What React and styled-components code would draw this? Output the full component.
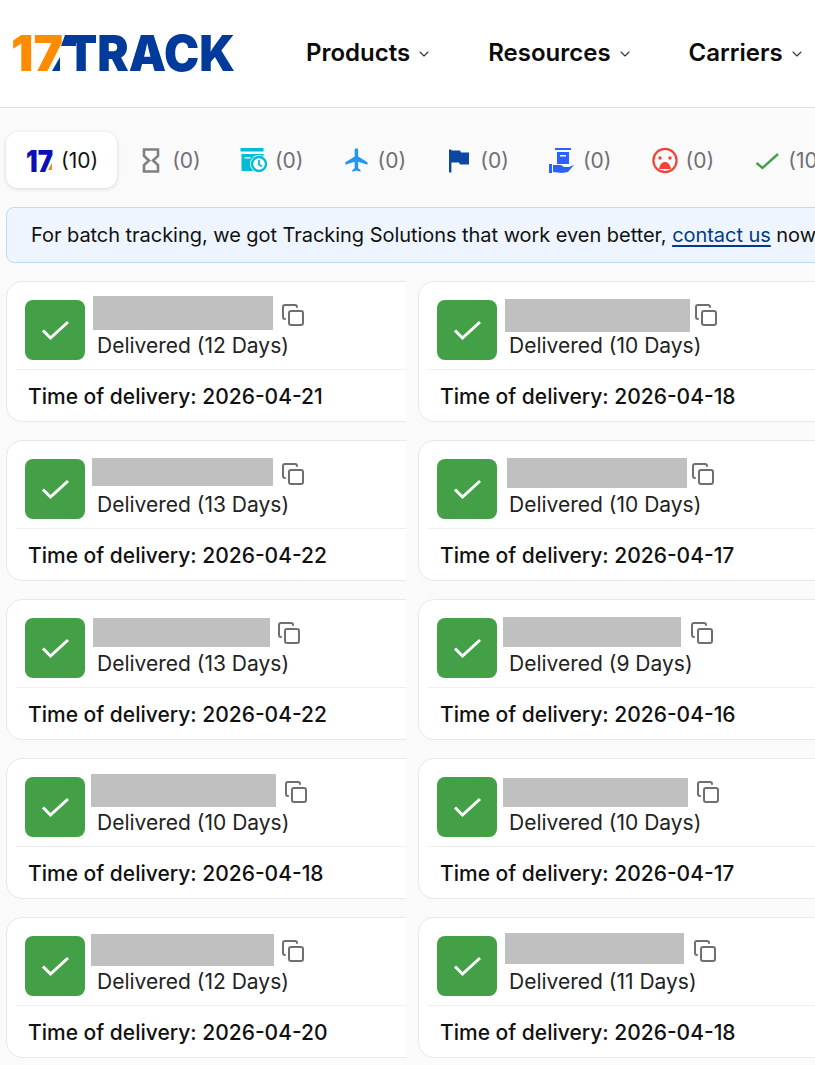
import React from 'react';
import styled, { createGlobalStyle } from 'styled-components';
import { Copy, ChevronDown } from 'lucide-react';

const GlobalStyle = createGlobalStyle`
  html, body {
    margin: 0;
    padding: 0;
    height: 100%;
    overflow: hidden;
    background: #fafafa;
    font-family: Inter, "Liberation Sans", sans-serif;
  }
`;

const Page = styled.div`
  width: 815px;
  height: 1065px;
  overflow: hidden;
`;

const Header = styled.header`
  display: flex;
  align-items: center;
  height: 107px;
  box-sizing: content-box;
  padding-left: 12px;
  background: #fff;
  border-bottom: 1px solid #e4e4e4;
`;

const LogoSvg = styled.svg`
  display: block;
  flex: none;
  margin-top: -1px;
`;

const Nav = styled.nav`
  display: flex;
  margin-left: 70px;
  gap: 56px;
  margin-top: -2px;
`;

const NavItem = styled.a`
  display: flex;
  align-items: center;
  gap: 6px;
  font-size: 24px;
  font-weight: 600;
  color: #0b0b0b;
  white-space: nowrap;
`;

const Tabs = styled.div`
  display: flex;
  margin: 24px 0 0 6px;
  width: 900px;
`;

const Tab = styled.div`
  display: flex;
  align-items: center;
  gap: 7px;
  height: 56px;
  padding: 0 19.1px 0 20px;
  flex: none;
  box-sizing: border-box;
  font-size: 21px;
  color: ${(p) => (p.$active ? '#111' : '#6f6f76')};
  background: ${(p) => (p.$active ? '#fff' : 'transparent')};
  border-radius: 12px;
  box-shadow: ${(p) => (p.$active ? '0 1px 4px rgba(0, 0, 0, 0.14)' : 'none')};
`;

const Banner = styled.div`
  display: flex;
  align-items: center;
  margin: 19px 0 0 6px;
  width: 900px;
  height: 56px;
  box-sizing: border-box;
  padding-left: 24px;
  background: #eef5ff;
  border: 1px solid #bbdcfb;
  border-radius: 8px;
  font-size: 20px;
  letter-spacing: -0.045px;
  color: #111;
  white-space: pre;
`;

const ContactLink = styled.a`
  color: #003a8c;
  text-decoration: underline;
  text-underline-offset: 3px;
`;

const Grid = styled.div`
  display: grid;
  grid-template-columns: 400px 400px;
  gap: 18px 12px;
  margin: 18px 0 0 6px;
`;

const CardClip = styled.div`
  width: 400px;
  overflow: hidden;
`;

const Card = styled.article`
  width: 430px;
  height: 141px;
  box-sizing: border-box;
  padding: 0 9px;
  background: #fff;
  border: 1px solid #e8e8e8;
  border-radius: 16px;
`;

const Top = styled.div`
  display: flex;
  height: 88px;
  padding: 18px 0 0 9px;
  box-sizing: border-box;
  border-bottom: 1px solid #efefef;
`;

const StatusBadge = styled.div`
  display: flex;
  flex: none;
  width: 60px;
  height: 60px;
  align-items: center;
  justify-content: center;
  background: #43a047;
  border-radius: 8px;
`;

const Info = styled.div`
  display: flex;
  flex-direction: column;
  margin: -4px 0 0 12px;
`;

const NameRow = styled.div`
  display: flex;
  align-items: flex-start;
  height: 38px;
`;

const Redacted = styled.div`
  flex: none;
  width: ${(p) => p.$w}px;
  height: ${(p) => p.$h}px;
  margin-left: ${(p) => p.$left}px;
  margin-top: ${(p) => p.$top}px;
  margin-right: ${(p) => p.$gap}px;
  background: #c0c0c0;
`;

const CopyIcon = styled(Copy)`
  flex: none;
  margin-top: 7px;
  color: #6e6e73;
`;

const StatusText = styled.div`
  font-size: 21px;
  line-height: 24px;
  color: #222;
  white-space: nowrap;
`;

const DeliveryTime = styled.div`
  padding-left: 12px;
  font-size: 21px;
  font-weight: 500;
  line-height: 54px;
  color: #111;
  white-space: nowrap;
`;

const Chevron = styled(ChevronDown)`
  margin-top: 3px;
  color: #333;
`;

const Logo = () => (
  <LogoSvg width="224" height="60" viewBox="0 -11 224 60">
    <text x="-1" y="37" fontFamily="Inter" fontWeight="900" fontSize="50" fill="#ff8c00" textLength="52" lengthAdjust="spacingAndGlyphs">17</text>
    <polygon points="40,37 48,37 48,23" fill="#003a9b" />
    <polygon points="53,1 64,1 64,12 49,12" fill="#003a9b" />
    <text x="53" y="37" fontFamily="Inter" fontWeight="900" fontSize="50" fill="#003a9b" textLength="170" lengthAdjust="spacingAndGlyphs">TRACK</text>
  </LogoSvg>
);

const IconSvg = styled.svg`
  display: block;
  flex: none;
  overflow: visible;
`;

const Icon = ({ children }) => (
  <IconSvg width="28" height="28" viewBox="0 0 28 28">{children}</IconSvg>
);

const tabIcons = {
  brand: (
    <Icon>
      <text x="0" y="26" fontFamily="Inter" fontWeight="900" fontSize="30" fill="#0a10b4" textLength="27" lengthAdjust="spacingAndGlyphs">17</text>
      <polygon points="22,24 26,24 26,17" fill="#ff8c00" />
    </Icon>
  ),
  pending: (
    <Icon>
      <path d="M7 3.500h14v6.500l-5 4.500 5 4.500v6.500H7V19l5-4.500L7 10z" fill="none" stroke="#808080" strokeWidth="2.600" />
    </Icon>
  ),
  transit: (
    <Icon>
      <rect x="0.500" y="2" width="23" height="3.500" fill="#00bcd4" />
      <rect x="1.500" y="8" width="22" height="17" fill="#00bcd4" />
      <rect x="4.500" y="11" width="6" height="1.500" fill="#fff" />
      <circle cx="19" cy="18" r="9" fill="#fff" />
      <circle cx="19" cy="18" r="7" fill="#fff" stroke="#00bcd4" strokeWidth="2.400" />
      <path d="M19 14v4.500l3 2" fill="none" stroke="#00bcd4" strokeWidth="1.800" />
    </Icon>
  ),
  plane: (
    <Icon>
      <path transform="scale(1.167)" d="M21 16v-2l-8-5V3.500c0-.83-.67-1.500-1.500-1.500S10 2.670 10 3.500V9l-8 5v2l8-2.500V19l-2 1.500V22l3.500-1 3.500 1v-1.500L13 19v-5.500l8 2.500z" fill="#2196f3" />
    </Icon>
  ),
  flag: (
    <Icon>
      <rect x="4" y="3.500" width="2.400" height="23" fill="#0d47a1" />
      <path d="M6 4.500h9l1 2h8v12h-9l-1-2H6z" fill="#0d47a1" />
    </Icon>
  ),
  pickup: (
    <Icon>
      <rect x="7" y="2" width="16" height="2" fill="#2962ff" />
      <path d="M9 6h12v12H9z" fill="#2962ff" />
      <rect x="12" y="9" width="6" height="1.500" fill="#fff" />
      <rect x="1" y="18" width="3" height="9" fill="#2962ff" />
      <path d="M5 19h8l3 2h5l5-2-6 7-6 1-9-1z" fill="#2962ff" />
    </Icon>
  ),
  failed: (
    <Icon>
      <circle cx="14" cy="14.500" r="11.600" fill="none" stroke="#f44336" strokeWidth="2.200" />
      <circle cx="9" cy="12" r="1.700" fill="#f44336" />
      <circle cx="19" cy="12" r="1.700" fill="#f44336" />
      <path d="M8 23c.8-4.500 3-7 6-7s5.200 2.500 6 7z" fill="#f44336" />
    </Icon>
  ),
  delivered: (
    <Icon>
      <path d="M3.500 17l6 5L25 8" fill="none" stroke="#43a047" strokeWidth="2.400" />
    </Icon>
  ),
};

const tabs = [
  { icon: 'brand', count: 10, active: true },
  { icon: 'pending', count: 0 },
  { icon: 'transit', count: 0 },
  { icon: 'plane', count: 0 },
  { icon: 'flag', count: 0 },
  { icon: 'pickup', count: 0 },
  { icon: 'failed', count: 0 },
  { icon: 'delivered', count: 10 },
];

// left/top are relative to where the tracking number would start
const shipments = [
  { days: '12 Days', date: '2026-04-21', left: -4, top: 0, w: 180, h: 34, gap: 8 },
  { days: '10 Days', date: '2026-04-18', left: -4, top: 3, w: 185, h: 33, gap: 4 },
  { days: '13 Days', date: '2026-04-22', left: -5, top: 3, w: 181, h: 28, gap: 8 },
  { days: '10 Days', date: '2026-04-17', left: -2, top: 3, w: 180, h: 30, gap: 4 },
  { days: '13 Days', date: '2026-04-22', left: -4, top: 4, w: 177, h: 29, gap: 7 },
  { days: '9 Days', date: '2026-04-16', left: -6, top: 3, w: 178, h: 30, gap: 9 },
  { days: '10 Days', date: '2026-04-18', left: -6, top: 1, w: 185, h: 33, gap: 8 },
  { days: '10 Days', date: '2026-04-17', left: -6, top: 5, w: 185, h: 29, gap: 8 },
  { days: '12 Days', date: '2026-04-20', left: -6, top: 2, w: 183, h: 32, gap: 7 },
  { days: '11 Days', date: '2026-04-18', left: -4, top: 1, w: 179, h: 31, gap: 9 },
];

const App = () => (
  <Page>
    <GlobalStyle />
    <Header>
      <Logo />
      <Nav>
        {['Products', 'Resources', 'Carriers'].map((name) => (
          <NavItem key={name}>
            {name}
            <Chevron size={16} strokeWidth={1.6} />
          </NavItem>
        ))}
      </Nav>
    </Header>

    <Tabs>
      {tabs.map((tab) => (
        <Tab key={tab.icon} $active={tab.active}>
          {tabIcons[tab.icon]}
          <span>{`(${tab.count})`}</span>
        </Tab>
      ))}
    </Tabs>

    <Banner>
      For batch tracking, we got Tracking Solutions that work even better, <ContactLink>contact us</ContactLink> now!
    </Banner>

    <Grid>
      {shipments.map((item) => (
        <CardClip key={`${item.date}-${item.w}`}>
          <Card>
            <Top>
              <StatusBadge>
                <svg width="60" height="60" viewBox="0 0 60 60">
                  <path d="M18 30.500l7.500 7.500L43 22" fill="none" stroke="#fff" strokeWidth="3" />
                </svg>
              </StatusBadge>
              <Info>
                <NameRow>
                  <Redacted $left={item.left} $top={item.top} $w={item.w} $h={item.h} $gap={item.gap} />
                  <CopyIcon size={24} strokeWidth={2} />
                </NameRow>
                <StatusText>{`Delivered (${item.days})`}</StatusText>
              </Info>
            </Top>
            <DeliveryTime>{`Time of delivery: ${item.date}`}</DeliveryTime>
          </Card>
        </CardClip>
      ))}
    </Grid>
  </Page>
);

export default App;
